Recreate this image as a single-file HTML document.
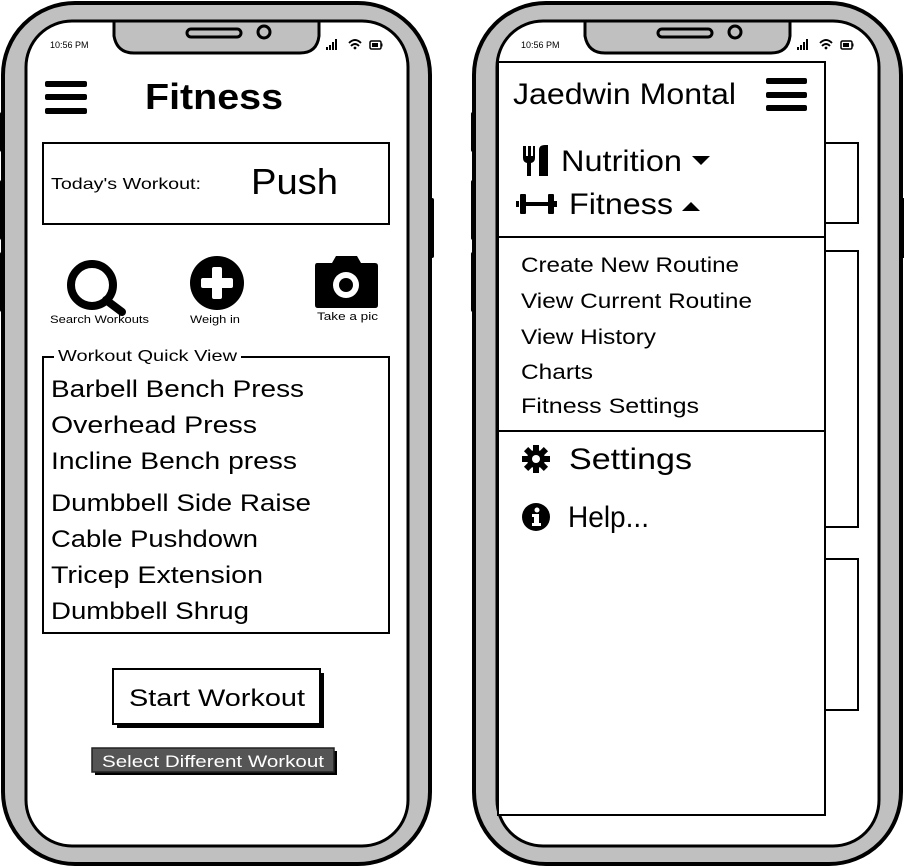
<!DOCTYPE html>
<html><head><meta charset="utf-8"><style>
html,body{margin:0;padding:0;background:#fff;width:904px;height:867px;overflow:hidden}
svg{display:block}
text{font-family:"Liberation Sans",sans-serif;fill:#000}
</style></head><body>
<svg width="904" height="867" viewBox="0 0 904 867" xmlns="http://www.w3.org/2000/svg">
<defs>
<g id="phone">
  <rect x="0" y="112" width="6" height="40" rx="2" fill="#000"/>
  <rect x="0" y="180" width="6" height="60" rx="2" fill="#000"/>
  <rect x="0" y="252" width="6" height="60" rx="2" fill="#000"/>
  <rect x="428" y="198" width="6" height="60" rx="2" fill="#000"/>
  <rect x="3" y="3" width="427" height="861" rx="72" fill="#c0c0c0" stroke="#000" stroke-width="4"/>
  <rect x="26" y="21" width="382" height="825" rx="46" fill="#fff" stroke="#000" stroke-width="3"/>
  <path d="M114 21 L114 36 Q117 53 134 53 L300 53 Q317 53 319 36 L319 21 Z" fill="#c0c0c0" stroke="#000" stroke-width="3"/>
  <rect x="187" y="29" width="54" height="8" rx="4" fill="#c0c0c0" stroke="#000" stroke-width="3"/>
  <circle cx="264" cy="32" r="6" fill="#c0c0c0" stroke="#000" stroke-width="3"/>
  <text x="50" y="48" font-size="9">10:56 PM</text>
  <rect x="326" y="47" width="2" height="3"/><rect x="329" y="45" width="2" height="5"/><rect x="332" y="42" width="2" height="8"/><rect x="335" y="39" width="2" height="11"/>
  <path d="M349 43 Q355 37 361 43 M351 46 Q355 42 359 46" fill="none" stroke="#000" stroke-width="1.8"/><circle cx="355" cy="48" r="1.4"/>
  <rect x="370" y="41" width="11" height="8" rx="1.5" fill="none" stroke="#000" stroke-width="1.5"/><rect x="372" y="43" width="6" height="4"/><rect x="381" y="43.5" width="1.5" height="3"/>
</g>
</defs>
<use href="#phone"/>
<use href="#phone" x="471"/>

<!-- LEFT SCREEN -->
<rect x="45" y="81" width="42" height="6" rx="2"/><rect x="45" y="94" width="42" height="6" rx="2"/><rect x="45" y="108" width="42" height="6" rx="2"/>
<text x="145" y="109" font-size="36" font-weight="bold" textLength="138" lengthAdjust="spacingAndGlyphs">Fitness</text>
<rect x="43" y="143" width="346" height="81" fill="none" stroke="#000" stroke-width="2"/>
<text x="51" y="189" font-size="16" textLength="150" lengthAdjust="spacingAndGlyphs">Today's Workout:</text>
<text x="251" y="194" font-size="36" textLength="87" lengthAdjust="spacingAndGlyphs">Push</text>
<!-- search icon -->
<circle cx="92" cy="285" r="21" fill="none" stroke="#000" stroke-width="8"/>
<line x1="106" y1="300" x2="122" y2="312" stroke="#000" stroke-width="8" stroke-linecap="round"/>
<text x="50" y="323" font-size="11" textLength="99" lengthAdjust="spacingAndGlyphs">Search Workouts</text>
<!-- plus icon -->
<circle cx="217" cy="283" r="27"/>
<rect x="201" y="278" width="32" height="10" rx="2" fill="#fff"/><rect x="212" y="267" width="10" height="32" rx="2" fill="#fff"/>
<text x="190" y="323" font-size="11" textLength="50" lengthAdjust="spacingAndGlyphs">Weigh in</text>
<!-- camera icon -->
<path d="M317 263 Q315 263 315 266 L315 305 Q315 308 318 308 L375 308 Q378 308 378 305 L378 266 Q378 263 375 263 L361 263 L357 256 L336 256 L332 263 Z"/>
<circle cx="346" cy="285" r="13" fill="#fff"/><circle cx="346" cy="285" r="7"/>
<text x="317" y="320" font-size="11" textLength="61" lengthAdjust="spacingAndGlyphs">Take a pic</text>
<!-- quick view -->
<rect x="43" y="357" width="346" height="276" fill="none" stroke="#000" stroke-width="2"/>
<rect x="54" y="348" width="187" height="14" fill="#fff"/>
<text x="58" y="361" font-size="16" textLength="179" lengthAdjust="spacingAndGlyphs">Workout Quick View</text>
<g font-size="24">
<text x="51" y="397" textLength="253" lengthAdjust="spacingAndGlyphs">Barbell Bench Press</text>
<text x="51" y="433" textLength="206" lengthAdjust="spacingAndGlyphs">Overhead Press</text>
<text x="51" y="469" textLength="246" lengthAdjust="spacingAndGlyphs">Incline Bench press</text>
<text x="51" y="511" textLength="260" lengthAdjust="spacingAndGlyphs">Dumbbell Side Raise</text>
<text x="51" y="547" textLength="207" lengthAdjust="spacingAndGlyphs">Cable Pushdown</text>
<text x="51" y="583" textLength="212" lengthAdjust="spacingAndGlyphs">Tricep Extension</text>
<text x="51" y="619" textLength="198" lengthAdjust="spacingAndGlyphs">Dumbbell Shrug</text>
</g>
<rect x="117" y="673" width="207" height="55"/>
<rect x="113" y="669" width="207" height="55" fill="#fff" stroke="#000" stroke-width="2"/>
<text x="129" y="706" font-size="24" textLength="176" lengthAdjust="spacingAndGlyphs">Start Workout</text>
<rect x="95" y="751" width="242" height="24"/>
<rect x="92" y="748" width="242" height="24" fill="#555" stroke="#222" stroke-width="1.5"/>
<text x="102" y="767" font-size="17" fill="#fff" style="fill:#fff" textLength="222" lengthAdjust="spacingAndGlyphs">Select Different Workout</text>

<!-- RIGHT SCREEN background boxes -->
<rect x="790" y="143" width="68" height="80" fill="#fff" stroke="#000" stroke-width="2"/>
<rect x="790" y="251" width="68" height="276" fill="#fff" stroke="#000" stroke-width="2"/>
<rect x="790" y="559" width="68" height="151" fill="#fff" stroke="#000" stroke-width="2"/>
<!-- drawer -->
<rect x="498" y="62" width="327" height="753" fill="#fff" stroke="#000" stroke-width="2"/>
<text x="513" y="104" font-size="30" textLength="223" lengthAdjust="spacingAndGlyphs">Jaedwin Montal</text>
<rect x="766" y="78" width="41" height="6" rx="2"/><rect x="766" y="92" width="41" height="6" rx="2"/><rect x="766" y="105" width="41" height="6" rx="2"/>
<!-- fork knife -->
<path d="M523 146 L523 158 Q523 162 527 163 L527 176 L531 176 L531 163 Q535 162 535 158 L535 146 L533 146 L533 156 L531 156 L531 146 L528 146 L528 156 L526 156 L526 146 Z"/>
<path d="M539 176 L539 150 Q539 145 545 145 L548 145 L548 176 Z"/>
<text x="561" y="171" font-size="30" textLength="121" lengthAdjust="spacingAndGlyphs">Nutrition</text>
<path d="M692 156 L710 156 L701 165 Z"/>
<!-- dumbbell -->
<rect x="516" y="201" width="3" height="6"/><rect x="520" y="194" width="6" height="20" rx="1"/><rect x="526" y="202" width="22" height="4"/><rect x="548" y="194" width="6" height="20" rx="1"/><rect x="554" y="201" width="3" height="6"/>
<text x="569" y="214" font-size="30" textLength="104" lengthAdjust="spacingAndGlyphs">Fitness</text>
<path d="M682 211 L700 211 L691 202 Z"/>
<line x1="498" y1="237" x2="825" y2="237" stroke="#000" stroke-width="2"/>
<g font-size="21">
<text x="521" y="272" textLength="218" lengthAdjust="spacingAndGlyphs">Create New Routine</text>
<text x="521" y="308" textLength="231" lengthAdjust="spacingAndGlyphs">View Current Routine</text>
<text x="521" y="344" textLength="135" lengthAdjust="spacingAndGlyphs">View History</text>
<text x="521" y="379" textLength="72" lengthAdjust="spacingAndGlyphs">Charts</text>
<text x="521" y="413" textLength="178" lengthAdjust="spacingAndGlyphs">Fitness Settings</text>
</g>
<line x1="498" y1="431" x2="825" y2="431" stroke="#000" stroke-width="2"/>
<!-- gear -->
<g transform="translate(536,459)">
<circle r="9"/>
<g fill="#000"><rect x="-3" y="-14" width="6" height="28"/><rect x="-3" y="-14" width="6" height="28" transform="rotate(45)"/><rect x="-3" y="-14" width="6" height="28" transform="rotate(90)"/><rect x="-3" y="-14" width="6" height="28" transform="rotate(135)"/></g>
<circle r="4" fill="#fff"/>
</g>
<text x="569" y="469" font-size="30" textLength="123" lengthAdjust="spacingAndGlyphs">Settings</text>
<circle cx="536" cy="517" r="14"/>
<circle cx="537" cy="510" r="2.5" fill="#fff"/><path d="M532 514 L539 514 L539 523 L541 523 L541 526 L532 526 L532 523 L534 523 L534 517 L532 517 Z" fill="#fff"/>
<text x="568" y="527" font-size="30" textLength="81" lengthAdjust="spacingAndGlyphs">Help...</text>
</svg>
</body></html>
